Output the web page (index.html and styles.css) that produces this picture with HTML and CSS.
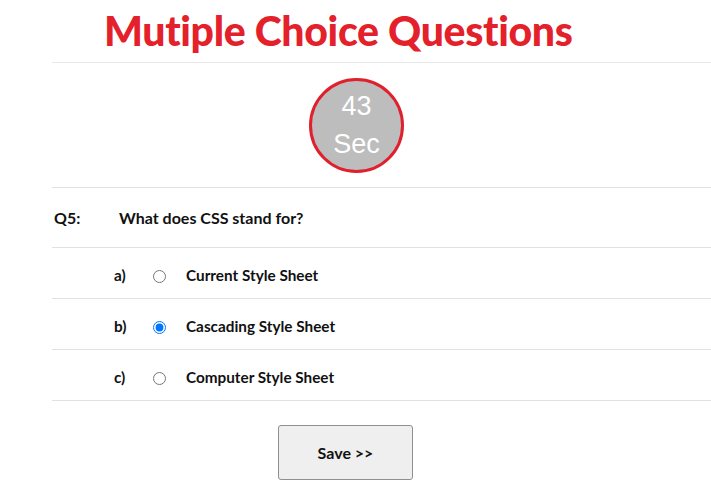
FILE: index.html
```html
<!DOCTYPE html>
<html>
<head>
<meta charset="utf-8">
<link rel="stylesheet" href="styles.css">
</head>
<body>
<div class="page">
  <h1 class="title">Mutiple Choice Questions</h1>
  <div class="quiz">
    <div class="timer-row">
      <div class="timer"><span>43</span><span>Sec</span></div>
    </div>
    <div class="question-row">
      <span class="qnum">Q5:</span>
      <span class="qtext">What does CSS stand for?</span>
    </div>
    <label class="option-row">
      <span class="letter">a)</span>
      <input type="radio" name="q5" class="radio">
      <span class="answer">Current Style Sheet</span>
    </label>
    <label class="option-row">
      <span class="letter">b)</span>
      <input type="radio" name="q5" class="radio" checked>
      <span class="answer">Cascading Style Sheet</span>
    </label>
    <label class="option-row">
      <span class="letter">c)</span>
      <input type="radio" name="q5" class="radio">
      <span class="answer">Computer Style Sheet</span>
    </label>
  </div>
  <div class="actions">
    <button class="save">Save &gt;&gt;</button>
  </div>
</div>
</body>
</html>
```
FILE: styles.css
```css
* { box-sizing: border-box; }
body {
  margin: 0;
  font-family: Lato, "Open Sans", sans-serif;
  color: #111;
  background: #fff;
}
.page {
  width: 711px;
}
.title {
  margin: 0;
  height: 62px;
  padding: 6px 0 0 104px;
  font-family: Lato, sans-serif;
  font-weight: 900;
  font-size: 41px;
  line-height: 50px;
  color: #e4202a;
  letter-spacing: -0.35px;
}
.quiz {
  margin-left: 52px;
  border-top: 1px solid #e8e8e8;
}
.timer-row {
  height: 125px;
  display: flex;
  justify-content: center;
  align-items: center;
  border-bottom: 1px solid #e1e1e1;
  padding-right: 50px;
}
.timer {
  width: 95px;
  height: 95px;
  border-radius: 50%;
  background: #bdbdbd;
  border: 3px solid #e0202d;
  display: flex;
  flex-direction: column;
  align-items: center;
  justify-content: center;
  color: #fff;
  font-family: "Liberation Sans", Arial, sans-serif;
  font-size: 27px;
  line-height: 38px;
}
.question-row {
  height: 60px;
  display: flex;
  align-items: center;
  border-bottom: 1px solid #e1e1e1;
  font-weight: 700;
  font-size: 16px;
}
.qnum {
  width: 67px;
  padding-left: 2px;
}
.option-row {
  height: 51px;
  display: flex;
  align-items: center;
  padding-top: 4px;
  border-bottom: 1px solid #e1e1e1;
  font-weight: 700;
  font-size: 15.3px;
}
.letter {
  width: 96px;
  padding-left: 62px;
}
.radio {
  margin: 2px 0 0 5px;
  width: 13px;
  height: 13px;
}
.answer {
  margin-left: 20px;
}
.actions {
  display: flex;
  justify-content: center;
  padding: 24px 20px 0 0;
}
.save {
  width: 135px;
  height: 55px;
  background: #efefef;
  border: 1px solid #8f8f8f;
  border-radius: 3px;
  font-family: Lato, sans-serif;
  font-weight: 700;
  font-size: 16px;
  color: #111;
  padding-bottom: 2px;
}
```
